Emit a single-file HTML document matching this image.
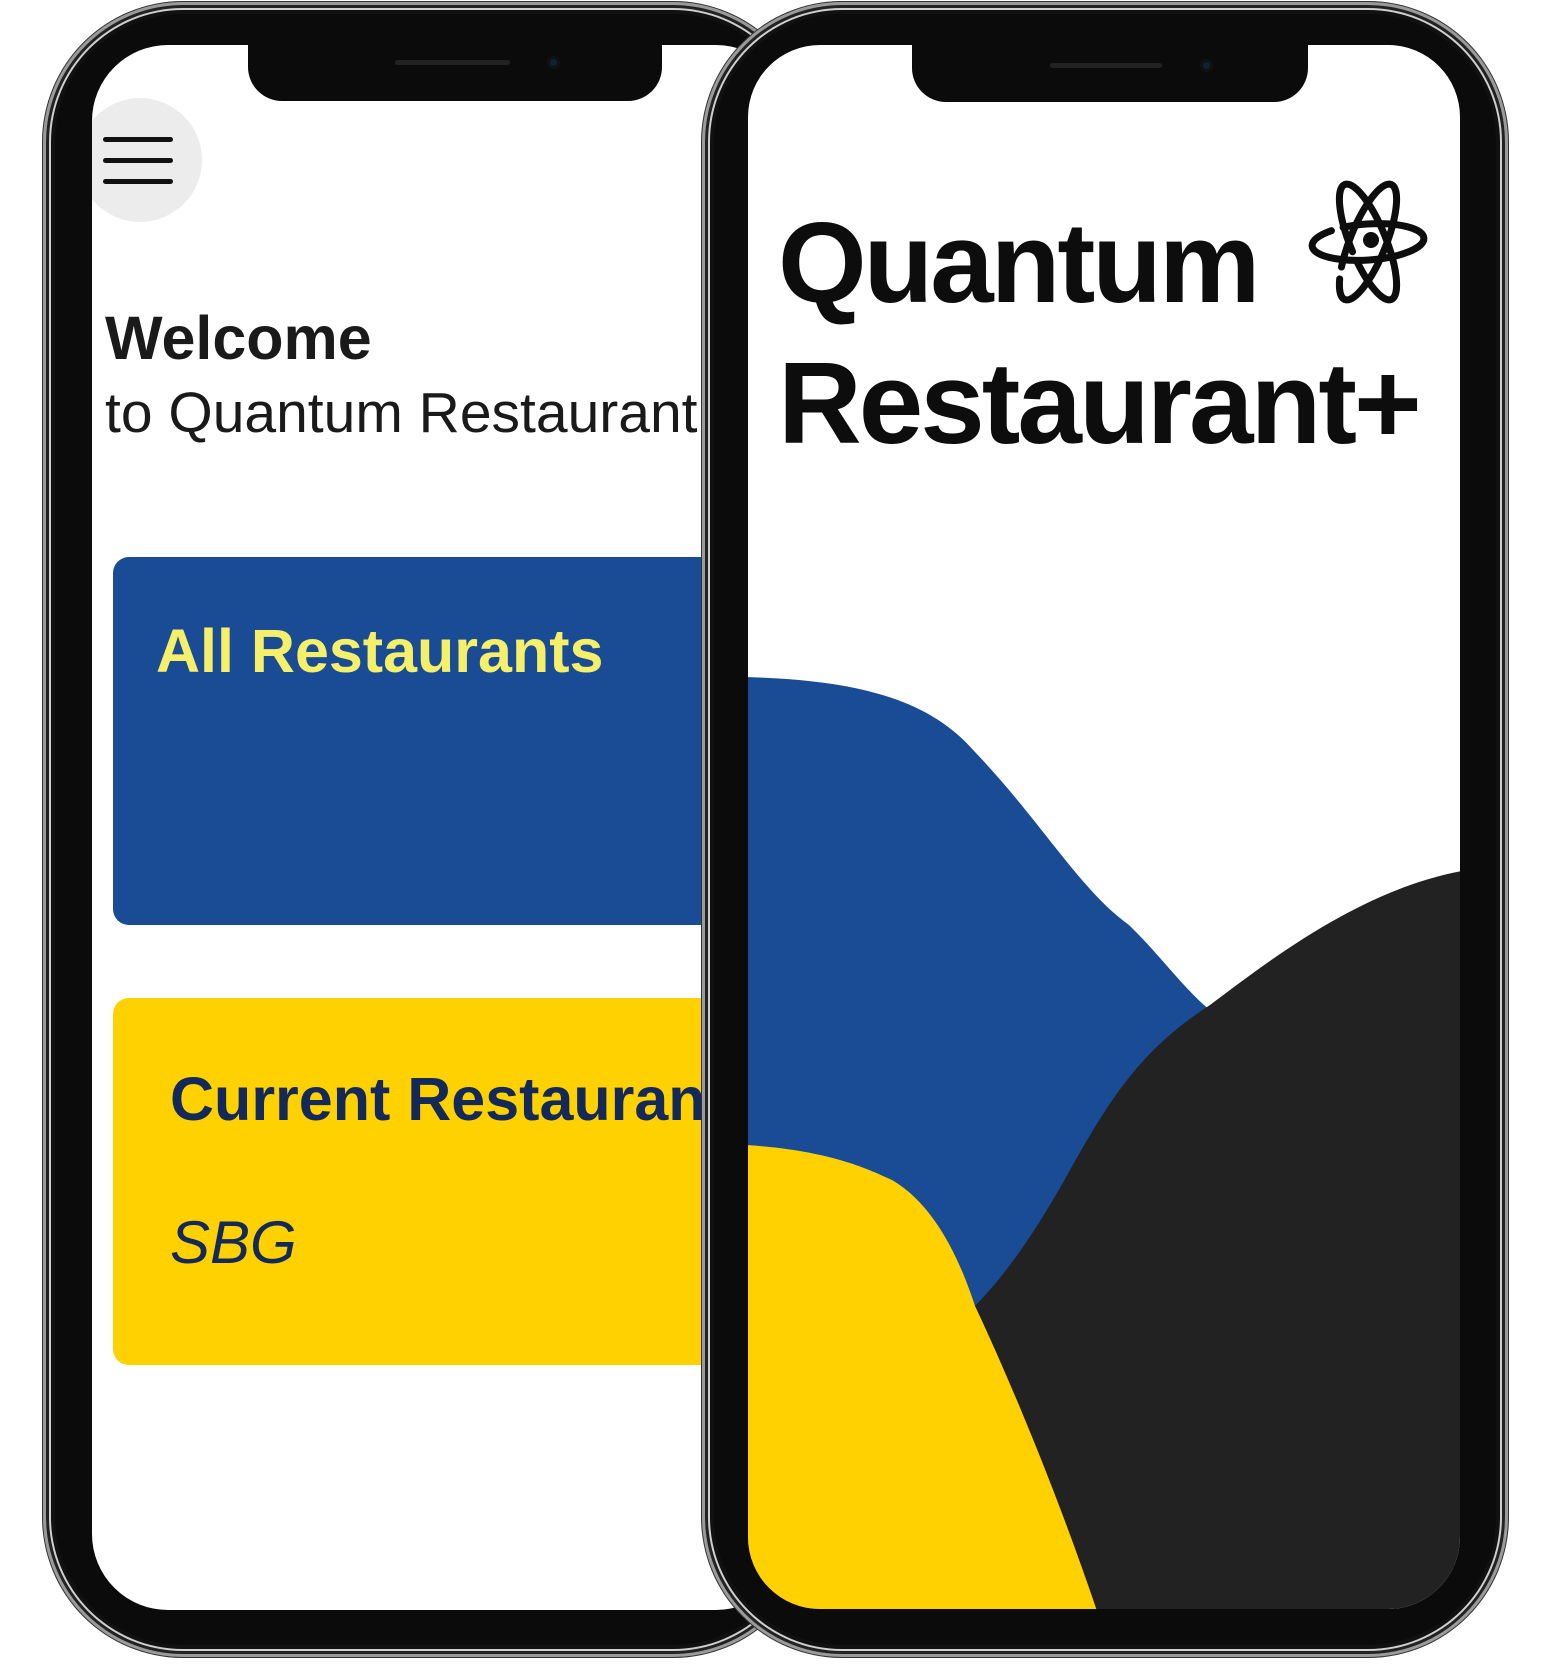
<!DOCTYPE html>
<html><head><meta charset="utf-8"><style>
*{margin:0;padding:0;box-sizing:border-box}
body{width:1548px;height:1680px;background:#fff;position:relative;overflow:hidden;font-family:"Liberation Sans",sans-serif}
.phone{position:absolute;background:#0b0b0b;border:3px solid #9a9a9a;box-shadow:inset 0 0 0 3px #222,inset 0 0 0 5px #cfcfcf,inset 0 0 0 9px #111,0 0 0 1px #333}
.screen{position:absolute;background:#fff;overflow:hidden}
.notch{position:absolute;background:#0b0b0b;border-radius:0 0 34px 34px}
.t{position:absolute;white-space:nowrap;line-height:1}
</style></head><body>

<div class="phone" style="left:43px;top:2px;width:770px;height:1655px;border-radius:140px"></div>
<div class="screen" style="left:92px;top:45px;width:700px;height:1565px;border-radius:76px">
  <div style="position:absolute;left:-14px;top:53px;width:124px;height:124px;border-radius:50%;background:#ececec"></div>
  <div style="position:absolute;left:11px;top:92px;width:70px;height:5px;background:#111;border-radius:3px"></div>
  <div style="position:absolute;left:11px;top:113px;width:70px;height:5px;background:#111;border-radius:3px"></div>
  <div style="position:absolute;left:11px;top:134px;width:70px;height:5px;background:#111;border-radius:3px"></div>
  <div class="t" style="left:13px;top:263px;font-size:61px;font-weight:bold;color:#1a1a1a">Welcome</div>
  <div class="t" style="left:13px;top:340px;font-size:57px;color:#1a1a1a">to Quantum Restaurant</div>
  <div style="position:absolute;left:21px;top:512px;width:760px;height:368px;background:#1a4c96;border-radius:16px"></div>
  <div class="t" style="left:64px;top:576px;font-size:61px;font-weight:bold;color:#f5ef6a">All Restaurants</div>
  <div style="position:absolute;left:21px;top:953px;width:760px;height:367px;background:#ffd100;border-radius:16px"></div>
  <div class="t" style="left:78px;top:1024px;font-size:61px;font-weight:bold;color:#12295a">Current Restaurant</div>
  <div class="t" style="left:78px;top:1168px;font-size:60px;font-style:italic;color:#12295a">SBG</div>
</div>
<div class="notch" style="left:248px;top:44px;width:414px;height:57px"></div>
<div style="position:absolute;left:395px;top:60px;width:115px;height:5px;background:#222;border-radius:3px"></div>
<div style="position:absolute;left:547px;top:56px;width:13px;height:13px;background:#123;border-radius:50%;box-shadow:inset 0 0 0 3px #111"></div>

<div class="phone" style="left:702px;top:2px;width:806px;height:1655px;border-radius:140px"></div>
<div class="screen" style="left:748px;top:45px;width:712px;height:1564px;border-radius:72px">
  <svg width="712" height="1564" viewBox="748 45 712 1564" style="position:absolute;left:0;top:0">
    <path d="M745 677 C860 680 930 700 975 752 C1040 820 1080 890 1129 925 C1160 955 1185 990 1210 1010 L1210 1620 L745 1620 Z" fill="#1a4c96"/>
    <path d="M1462 871 C1360 890 1270 960 1210 1005 C1140 1050 1110 1100 1075 1161 C1040 1225 1010 1270 975 1306 L1096 1620 L1462 1620 Z" fill="#222"/>
    <path d="M745 1145 C830 1150 870 1170 892 1180 C935 1205 960 1260 975 1306 C1010 1380 1060 1500 1100 1620 L745 1620 Z" fill="#ffd100"/>
  </svg>
  <div class="t" style="left:30px;top:162px;font-size:114px;font-weight:bold;color:#0d0d0d;letter-spacing:-3px">Quantum</div>
  <div class="t" style="left:30px;top:300px;font-size:116px;font-weight:bold;color:#0d0d0d;letter-spacing:-3px">Restaurant+</div>
  <svg width="130" height="140" viewBox="-65 -70 130 140" style="position:absolute;left:555px;top:127px">
    <g fill="none" stroke="#0d0d0d" stroke-width="7" stroke-linecap="round">
      <ellipse rx="56" ry="18" transform="rotate(-4)" stroke-dasharray="150 12 200"/>
      <ellipse rx="18" ry="62" transform="rotate(-22)" stroke-dasharray="120 12 200"/>
      <ellipse rx="18" ry="62" transform="rotate(22)" stroke-dasharray="90 12 200"/>
    </g>
    <circle cx="3" cy="-2" r="8" fill="#0d0d0d"/>
  </svg>
</div>
<div class="notch" style="left:912px;top:44px;width:396px;height:58px"></div>
<div style="position:absolute;left:1050px;top:63px;width:112px;height:5px;background:#222;border-radius:3px"></div>
<div style="position:absolute;left:1200px;top:59px;width:13px;height:13px;background:#123;border-radius:50%;box-shadow:inset 0 0 0 3px #111"></div>
</body></html>
